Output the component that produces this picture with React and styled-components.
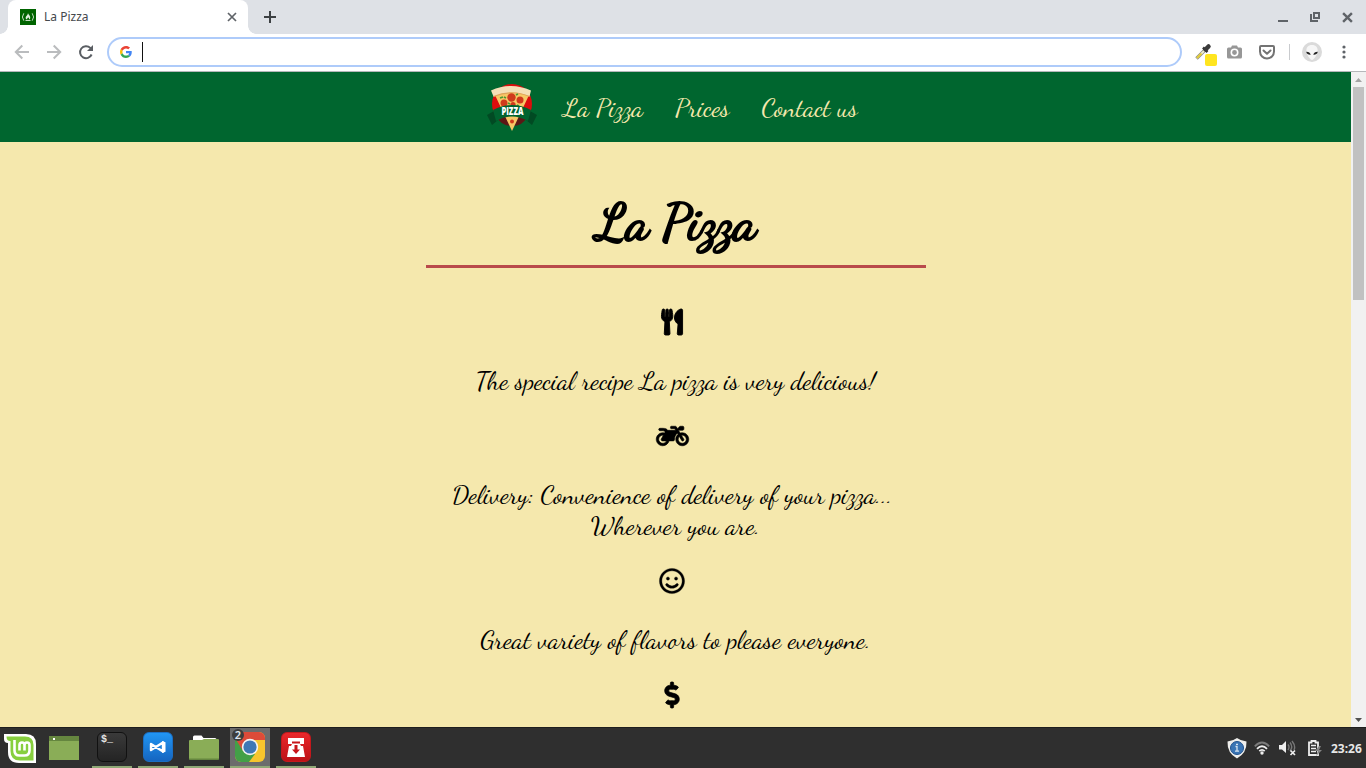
import React from "react";
import styled, { createGlobalStyle } from "styled-components";
import { FaUtensils, FaMotorcycle, FaRegSmile, FaDollarSign } from "react-icons/fa";

const GlobalStyle = createGlobalStyle`
  * { box-sizing: border-box; }
  body { margin: 0; overflow: hidden; font-family: "Noto Sans", sans-serif; }
  svg { display: block; flex: none; }
`;

const Screen = styled.div`
  width: 1366px;
  height: 768px;
  display: flex;
  flex-direction: column;
`;

const TabStrip = styled.div`
  height: 34px;
  display: flex;
  align-items: center;
  background: #dee1e6;
  padding: 0 13px 0 8px;
`;

const Tab = styled.div`
  position: relative;
  width: 240px;
  height: 34px;
  display: flex;
  align-items: center;
  padding: 0 11px 0 12px;
  background: #fff;
  border-radius: 8px 8px 0 0;
  &::before,
  &::after {
    content: "";
    position: absolute;
    bottom: 0;
    width: 8px;
    height: 8px;
  }
  &::before {
    left: -8px;
    background: radial-gradient(circle at 0 0, #dee1e6 7.5px, #fff 8px);
  }
  &::after {
    right: -8px;
    background: radial-gradient(circle at 100% 0, #dee1e6 7.5px, #fff 8px);
  }
`;

const TabTitle = styled.span`
  flex: 1;
  margin-left: 8px;
  font-size: 12px;
  line-height: 16px;
  color: #45494d;
`;

const NewTab = styled.div`
  margin-left: 16px;
  flex: 1;
`;

const WindowControls = styled.div`
  display: flex;
  align-items: center;
  gap: 22px;
`;

const Toolbar = styled.div`
  height: 38px;
  display: flex;
  align-items: center;
  padding: 0 16px 1px 14px;
  background: #fff;
  border-bottom: 1px solid #b5b7ba;
`;

const NavButtons = styled.div`
  display: flex;
  gap: 16px;
  margin-right: 13px;
`;

const AddressBar = styled.div`
  width: 1075px;
  height: 30px;
  display: flex;
  align-items: center;
  gap: 10px;
  padding-left: 11px;
  border: 2px solid #aecbfa;
  border-radius: 15px;
`;

const Caret = styled.div`
  width: 1px;
  height: 20px;
  background: #111;
`;

const Extensions = styled.div`
  flex: 1;
  display: flex;
  align-items: center;
  margin-left: 13px;
`;

const Extension = styled.div`
  position: relative;
  width: ${(p) => p.$width || 20}px;
  margin-right: ${(p) => p.$after || 0}px;
  display: flex;
  justify-content: center;
`;

const ColorBadge = styled.span`
  position: absolute;
  left: 10px;
  top: 11px;
  width: 12px;
  height: 12px;
  border-radius: 2px;
  background: #ffe51f;
`;

const Divider = styled.div`
  width: 1px;
  height: 16px;
  background: #c9cbce;
  margin-right: 12px;
`;

const Viewport = styled.div`
  height: 655px;
  display: flex;
`;

const Page = styled.main`
  flex: 1;
  height: 655px;
  overflow: hidden;
  background: #f5e8ad;
  color: #000;
  font-family: "Dancing Script", "Liberation Serif", cursive;
  font-size: 26px;
  line-height: 31px;
`;

const Header = styled.header`
  height: 70px;
  display: flex;
  align-items: center;
  padding-left: 486px;
  background: #00662f;
`;

const Nav = styled.nav`
  display: flex;
  margin-left: 25px;
  gap: 32px;
`;

const NavLink = styled.a`
  white-space: nowrap;
  color: #f5e8ad;
`;

const Title = styled.h1`
  width: 500px;
  height: 126px;
  margin: 0 auto;
  padding: 48px 0 0 2px;
  border-bottom: 3px solid #b94b4b;
  text-align: center;
  font-size: 52px;
  font-weight: 400;
  line-height: 65px;
  -webkit-text-stroke: 2.1px #000;
`;

const Features = styled.section`
  padding-top: 38px;
  display: flex;
  flex-direction: column;
  align-items: center;
`;

const FeatureIcon = styled.div`
  height: 31px;
  display: flex;
  align-items: center;
  margin-right: 7px;
  svg {
    width: ${(p) => p.$width}px;
    height: 26px;
    overflow: visible;
    stroke-width: ${(p) => p.$weight};
  }
`;

const FeatureText = styled.p`
  margin: 28px 0 24px;
  text-align: center;
`;

const Line = styled.span`
  display: block;
  white-space: pre;
`;

const Scrollbar = styled.div`
  width: 15px;
  display: flex;
  flex-direction: column;
  align-items: center;
  background: #f1f1f1;
`;

const ScrollArrow = styled.div`
  height: 15px;
  display: flex;
  align-items: center;
`;

const ScrollTrack = styled.div`
  flex: 1;
`;

const ScrollThumb = styled.div`
  width: 11px;
  height: 213px;
  background: #c1c1c1;
`;

const Taskbar = styled.footer`
  height: 41px;
  display: flex;
  background: #2f2f2f;
  border-top: 1px solid #1e1e1e;
`;

const Launcher = styled.div`
  width: 40px;
  margin-right: ${(p) => p.$after}px;
  display: flex;
  align-items: center;
  justify-content: center;
`;

const TaskButton = styled.div`
  position: relative;
  width: 40px;
  height: 40px;
  margin-right: 6px;
  display: flex;
  align-items: center;
  justify-content: center;
  background: ${(p) => (p.$active ? "#6c6c6c" : "transparent")};
  border-bottom: 2px solid #8fa876;
`;

const AppTile = styled.div`
  width: 30px;
  height: 30px;
  display: flex;
  align-items: center;
  justify-content: center;
  border-radius: 6px;
  background: ${(p) => p.$fill};
  border: 1px solid ${(p) => p.$edge};
`;

const Prompt = styled.span`
  width: 100%;
  height: 100%;
  padding: 2px 0 0 3px;
  font: bold 10px/10px "Liberation Mono", monospace;
  color: #e8e8e8;
`;

const CountBadge = styled.span`
  position: absolute;
  left: 2px;
  top: 1px;
  width: 12px;
  height: 12px;
  border-radius: 6px;
  background: #3d3d3d;
  color: #dfe6ee;
  font-size: 11px;
  font-weight: 600;
  line-height: 12px;
  text-align: center;
`;

const Tray = styled.div`
  flex: 1;
  display: flex;
  align-items: center;
  justify-content: flex-end;
  padding: 0 3px 0 0;
`;

const TrayItem = styled.div`
  margin-right: ${(p) => p.$after}px;
`;

const Clock = styled.span`
  width: 32px;
  padding-top: 1px;
  font-size: 12px;
  font-weight: 700;
  line-height: 16px;
  white-space: nowrap;
  color: #e6e6e6;
`;

const Favicon = () => (
  <svg width="16" height="16" viewBox="0 0 16 16">
    <path d="M0 0h16v16H0z" fill="#006400" />
    <g fill="none" stroke="#c4dcc2" strokeWidth="1">
      <path d="M3.800 4.300Q1 8 3.800 11.700M12.200 4.300Q15 8 12.200 11.700M5.500 11.500h5" />
    </g>
    <path d="M8 4c.4 2 2.600 2.600 2.200 5-.2 1-.8 1.400-1.400 1.600.6-1.200 0-1.800-.7-2.400-.3 1-1.400 1.200-.8 2.400-2.600-1-1.600-3-.4-4.200C7.600 5.700 8 5 8 4z" fill="#dfeedd" />
  </svg>
);

const Cross = ({ size, width, color }) => (
  <svg width={size} height={size} viewBox="0 0 10 10">
    <path d="M1 1l8 8M9 1L1 9" stroke={color} strokeWidth={width} />
  </svg>
);

const Arrow = ({ flip }) => (
  <svg width="16" height="16" viewBox="0 0 16 16">
    <path
      d="M15 8H2M8.300 1.500L1.800 8l6.500 6.500"
      transform={flip ? "matrix(-1 0 0 1 16 0)" : undefined}
      fill="none"
      stroke="#babcbe"
      strokeWidth="2"
    />
  </svg>
);

const Reload = () => (
  <svg width="16" height="16" viewBox="0 0 16 16">
    <path d="M13.600 10.500A6 6 0 1 1 12.300 3.900L13.500 5" fill="none" stroke="#5a5e63" strokeWidth="2" />
    <path d="M15 1v6H9z" fill="#5a5e63" />
  </svg>
);

const GoogleMark = () => (
  <svg width="12" height="12" viewBox="0 0 48 48">
    <path fill="#EA4335" d="M24 9.500c3.540 0 6.710 1.220 9.210 3.600l6.850-6.850C35.900 2.380 30.470 0 24 0 14.620 0 6.510 5.380 2.560 13.220l7.980 6.190C12.430 13.720 17.740 9.500 24 9.500z" />
    <path fill="#4285F4" d="M46.980 24.550c0-1.570-.15-3.090-.38-4.550H24v9.020h12.940c-.58 2.960-2.260 5.480-4.780 7.180l7.730 6c4.510-4.180 7.090-10.360 7.090-17.650z" />
    <path fill="#FBBC05" d="M10.530 28.590c-.48-1.450-.76-2.990-.76-4.590s.27-3.140.76-4.590l-7.980-6.190C.92 16.460 0 20.120 0 24c0 3.880.92 7.540 2.560 10.780l7.970-6.190z" />
    <path fill="#34A853" d="M24 48c6.480 0 11.930-2.130 15.890-5.810l-7.730-6c-2.150 1.450-4.920 2.300-8.160 2.300-6.260 0-11.570-4.220-13.470-9.910l-7.980 6.190C6.510 42.620 14.620 48 24 48z" />
  </svg>
);

const Eyedropper = () => (
  <svg width="18" height="18" viewBox="0 0 18 18">
    <path d="M1.500 15.500L10 7" stroke="#8a8a80" strokeWidth="3.400" />
    <path d="M2 15L9.500 7.500" stroke="#f1efd0" strokeWidth="1.800" />
    <path d="M2 15L6.500 10.500" stroke="#e0c933" strokeWidth="2" />
    <path d="M8 4.500l4.500 4.500" stroke="#333" strokeWidth="2.500" />
    <path d="M10.500 6.500L13.500 3.500" stroke="#3b3b3b" strokeWidth="4.500" strokeLinecap="round" />
  </svg>
);

const Camera = () => (
  <svg width="15" height="14" viewBox="0 0 15 14">
    <path d="M1.500 2.500H4L5 .5h5l1 2h2.500q1.500 0 1.500 1.500v8q0 1.500-1.500 1.500h-12Q0 13.500 0 12V4q0-1.500 1.500-1.500z" fill="#979797" />
    <circle cx="7.500" cy="7.500" r="3.200" fill="#979797" stroke="#fff" strokeWidth="1.600" />
  </svg>
);

const Pocket = () => (
  <svg width="16" height="15" viewBox="0 0 16 15">
    <path d="M2 1h12q1 0 1 1v4.500a7 7 0 0 1-14 0V2q0-1 1-1z" fill="none" stroke="#737373" strokeWidth="2" />
    <path d="M4.500 5.500L8 8.800l3.500-3.300" fill="none" stroke="#737373" strokeWidth="2" strokeLinecap="round" strokeLinejoin="round" />
  </svg>
);

const Avatar = () => (
  <svg width="20" height="20" viewBox="0 0 20 20">
    <circle cx="10" cy="10" r="10" fill="#dadada" />
    <path d="M10 3c4 0 6 2.500 5.600 6.500C15.200 13 12 17.500 10 18c-2-.5-5.200-5-5.600-8.500C4 5.500 6 3 10 3z" fill="#f6f6f6" />
    <path d="M4.200 9.800c2.300-.1 4 .8 4.500 3C6.500 13 4.700 12.200 4.200 9.800zM15.800 9.800c-2.300-.1-4 .8-4.500 3 2.200.2 4-.6 4.500-3z" fill="#222" />
  </svg>
);

const PizzaLogo = () => (
  <svg width="52" height="50" viewBox="0 0 52 50">
    <circle cx="26" cy="22" r="20" fill="#dc0d0d" />
    <path d="M10 34q16-7 32 0-5 10-16 10T10 34z" fill="#5b1715" />
    <path d="M8 11q17-9 36 0L26 49z" fill="#f7c765" />
    <path d="M5 8.500q20-9 40 0l-1.500 6Q26 6.500 7.500 14.500z" fill="#f4dfb6" />
    <path d="M7.500 14.500Q26 7 43.500 14.500" fill="none" stroke="#dfa35a" strokeWidth="1.200" />
    <g fill="#d03a1c">
      <circle cx="25.500" cy="15.500" r="4.200" />
      <circle cx="34" cy="18" r="3.500" />
      <circle cx="18" cy="21" r="3.500" />
      <circle cx="27" cy="22.500" r="2.600" />
      <circle cx="26" cy="39.500" r="2" />
    </g>
    <path d="M14 16l3-1M18 15l2 1M30 13l2-1M22 21l2 1M31 23l2 1" stroke="#4d9833" strokeWidth="1.800" />
    <path d="M1 33l7-4 4 9-6 5zM51 33l-7-4-4 9 6 5z" fill="#014a23" />
    <path d="M7 28q19-10 38 0l-3 11q-16-9-32 0z" fill="#00632f" />
    <text x="26.500" y="32.500" textAnchor="middle" textLength="22" lengthAdjust="spacingAndGlyphs" fill="#fff" fontFamily="Open Sans, sans-serif" fontWeight="800" fontSize="10">PIZZA</text>
  </svg>
);

const Triangle = ({ down, color }) => (
  <svg width="7" height="4" viewBox="0 0 7 4">
    <path d={down ? "M0 0h7L3.500 4z" : "M0 4h7L3.500 0z"} fill={color} />
  </svg>
);

const MintLogo = () => (
  <svg width="32" height="29" viewBox="0 0 32 29">
    <path d="M0 0h22q10 0 10 10v19H15Q4 29 4 18V9Q0 9 0 5z" fill="#fff" />
    <path d="M2.500 2.500H21q8.500 0 8.500 8.500v15.500H16q-9.500 0-9.500-9.500V7Q2.500 7 2.500 2.500z" fill="#87cf3e" />
    <path d="M10.500 6v10.500q0 5 5 5h5q5 0 5-5V11q0-2.500-2.500-2.500T20.500 11v5.500M20.500 11q0-2.500-2.500-2.500T15.500 11v5.500" fill="none" stroke="#fff" strokeWidth="2.600" />
  </svg>
);

const DesktopIcon = () => (
  <svg width="30" height="24" viewBox="0 0 30 24">
    <path d="M0 0h30v24H0z" fill="#8aad57" />
    <path d="M0 0h30v5H0z" fill="#65863f" />
    <path d="M4 2h2v2H4z" fill="#fff" />
  </svg>
);

const CodeMark = () => (
  <svg width="18" height="18" viewBox="0 0 18 18">
    <path d="M2 6l12 7.500v-9L2 12z" fill="none" stroke="#fff" strokeWidth="2.400" strokeLinejoin="round" />
    <path d="M13 3l3.500 1.200v9.600L13 15z" fill="#fff" />
  </svg>
);

const FolderIcon = () => (
  <svg width="30" height="25" viewBox="0 0 30 25">
    <path d="M4 2q0-1.500 1.500-1.500h7L14.500 3H26q1.500 0 1.500 1.500V9H4z" fill="#fff" />
    <path d="M1 5h12l2-1h14q1 0 1 1v18.500q0 1-1 1H1q-1 0-1-1V6q0-1 1-1z" fill="#8aad57" />
    <path d="M0 23.500h30q0 1.500-1 1.500H1q-1 0-1-1.500z" fill="#65863f" />
  </svg>
);

const ChromeIcon = () => (
  <svg width="30" height="30" viewBox="0 0 30 30">
    <clipPath id="tile"><rect width="30" height="30" rx="6" /></clipPath>
    <g clipPath="url(#tile)">
      <path d="M0 0h30v30H0z" fill="#f7c52d" />
      <path d="M0 0h30v8H15l-8 11L0 7z" fill="#dd4b39" />
      <path d="M0 6l8 13 12 3-6 8H0z" fill="#43a047" />
    </g>
    <circle cx="15" cy="15" r="8.200" fill="#f3f3f3" />
    <circle cx="15" cy="15" r="6.600" fill="#3f78b5" />
  </svg>
);

const DownloadMark = () => (
  <svg width="18" height="19" viewBox="0 0 18 19">
    <path d="M1 0h16v6h-4l1 2h2l2 11H0L2 8h2l1-2H1z" fill="#fff" />
    <path d="M5 3.500h8v2H5zM7.500 7h3v4.500H13L9 16l-4-4.500h2.500z" fill="#c7161b" />
  </svg>
);

const Shield = () => (
  <svg width="20" height="21" viewBox="0 0 20 21">
    <path d="M10 0Q14 3 19.500 3.500 20 15 10 20.500 0 15 .5 3.500 6 3 10 0z" fill="#eeeeec" />
    <circle cx="10" cy="10" r="6.500" fill="#3a75b5" stroke="#20528e" strokeWidth="1" />
    <path d="M8.500 8.500H10v4.500M8 13.200h4M9 6.300h2" stroke="#d4e2f0" strokeWidth="1.300" fill="none" />
  </svg>
);

const Wifi = () => (
  <svg width="16" height="14" viewBox="0 0 16 14">
    <g fill="none" strokeWidth="1.800">
      <path d="M.8 5.300Q8-2.300 15.200 5.300" stroke="#7b7b7b" />
      <path d="M3 7.800Q8 2.700 13 7.800M5.300 10.200Q8 7.500 10.700 10.200" stroke="#eee" />
    </g>
    <circle cx="8" cy="12" r="1.700" fill="#eee" />
  </svg>
);

const Volume = () => (
  <svg width="17" height="16" viewBox="0 0 17 16">
    <path d="M0 5h3l4-4v12L3 9.500H0z" fill="#eee" />
    <path d="M9 4.500q2 2.500 0 5.500M11 2.500q3.500 4.500 0 8.500M13 1q4 5 2 9" stroke="#777" strokeWidth="1.400" fill="none" />
    <path d="M11.500 10.500l4.500 4.500M16 10.500L11.500 15" stroke="#eee" strokeWidth="1.700" />
  </svg>
);

const Battery = () => (
  <svg width="14" height="16" viewBox="0 0 14 16">
    <path d="M3.500 1h4v1.500H10V15H1V2.500h2.500z" fill="none" stroke="#eee" strokeWidth="1.800" />
    <path d="M3 5.500h5M3 8.500h5M3 11.500h5" stroke="#eee" strokeWidth="1.500" />
    <path d="M11 6l-4 5h3l-2 5 6-6h-3l2-4z" fill="#858585" />
  </svg>
);

const navLinks = ["La Pizza", "Prices", "Contact us"];

const features = [
  { Icon: FaUtensils, width: 26, weight: 18, lines: ["The special recipe La pizza is very delicious!"] },
  {
    Icon: FaMotorcycle,
    width: 33,
    weight: 12,
    lines: ["Delivery: Convenience of delivery of your pizza...\u00a0", "Wherever you are."],
  },
  { Icon: FaRegSmile, width: 26, weight: 6, lines: ["Great variety of flavors to please everyone."] },
  { Icon: FaDollarSign, width: 26, weight: 14, lines: [] },
];

export default function App() {
  return (
    <Screen>
      <GlobalStyle />
      <TabStrip>
        <Tab>
          <Favicon />
          <TabTitle>La Pizza</TabTitle>
          <Cross size={10} width={1.7} color="#5f6368" />
        </Tab>
        <NewTab>
          <svg width="12" height="12" viewBox="0 0 12 12">
            <path d="M6 0v12M0 6h12" stroke="#3c4043" strokeWidth="2" />
          </svg>
        </NewTab>
        <WindowControls>
          <svg width="10" height="10" viewBox="0 0 10 10"><path d="M0 8h10v2H0z" fill="#5f6368" /></svg>
          <svg width="10" height="10" viewBox="0 0 10 10">
            <path d="M4 1h5v5H4zM1 2v7h7" fill="none" stroke="#5f6368" strokeWidth="2" />
          </svg>
          <Cross size={11} width={2.2} color="#5f6368" />
        </WindowControls>
      </TabStrip>
      <Toolbar>
        <NavButtons>
          <Arrow />
          <Arrow flip />
          <Reload />
        </NavButtons>
        <AddressBar>
          <GoogleMark />
          <Caret />
        </AddressBar>
        <Extensions>
          <Extension $width={18} $after={11}>
            <Eyedropper />
            <ColorBadge />
          </Extension>
          <Extension $after={13}><Camera /></Extension>
          <Extension $after={12}><Pocket /></Extension>
          <Divider />
          <Extension $after={20}><Avatar /></Extension>
          <svg width="4" height="14" viewBox="0 0 4 14" fill="#5f6368">
            <circle cx="2" cy="2" r="1.600" />
            <circle cx="2" cy="7" r="1.600" />
            <circle cx="2" cy="12" r="1.600" />
          </svg>
        </Extensions>
      </Toolbar>
      <Viewport>
        <Page>
          <Header>
            <PizzaLogo />
            <Nav>
              {navLinks.map((label) => (
                <NavLink key={label}>{label}</NavLink>
              ))}
            </Nav>
          </Header>
          <Title>La Pizza</Title>
          <Features>
            {features.map(({ Icon, width, weight, lines }, i) => (
              <React.Fragment key={i}>
                <FeatureIcon $width={width} $weight={weight}><Icon /></FeatureIcon>
                {lines.length > 0 && (
                  <FeatureText>
                    {lines.map((text) => (
                      <Line key={text}>{text}</Line>
                    ))}
                  </FeatureText>
                )}
              </React.Fragment>
            ))}
          </Features>
        </Page>
        <Scrollbar>
          <ScrollArrow><Triangle color="#a3a3a3" /></ScrollArrow>
          <ScrollTrack><ScrollThumb /></ScrollTrack>
          <ScrollArrow><Triangle down color="#505050" /></ScrollArrow>
        </Scrollbar>
      </Viewport>
      <Taskbar>
        <Launcher $after={4}><MintLogo /></Launcher>
        <Launcher $after={8}><DesktopIcon /></Launcher>
        <TaskButton>
          <AppTile $fill="linear-gradient(#3a3a3a, #242424)" $edge="#111"><Prompt>$_</Prompt></AppTile>
        </TaskButton>
        <TaskButton>
          <AppTile $fill="linear-gradient(#2196f3, #1565c0)" $edge="#1b6fc4"><CodeMark /></AppTile>
        </TaskButton>
        <TaskButton><FolderIcon /></TaskButton>
        <TaskButton $active>
          <ChromeIcon />
          <CountBadge>2</CountBadge>
        </TaskButton>
        <TaskButton>
          <AppTile $fill="linear-gradient(#e9282b, #bd1116)" $edge="#c4181c"><DownloadMark /></AppTile>
        </TaskButton>
        <Tray>
          <TrayItem $after={7}><Shield /></TrayItem>
          <TrayItem $after={9}><Wifi /></TrayItem>
          <TrayItem $after={12}><Volume /></TrayItem>
          <TrayItem $after={9}><Battery /></TrayItem>
          <Clock>23:26</Clock>
        </Tray>
      </Taskbar>
    </Screen>
  );
}
